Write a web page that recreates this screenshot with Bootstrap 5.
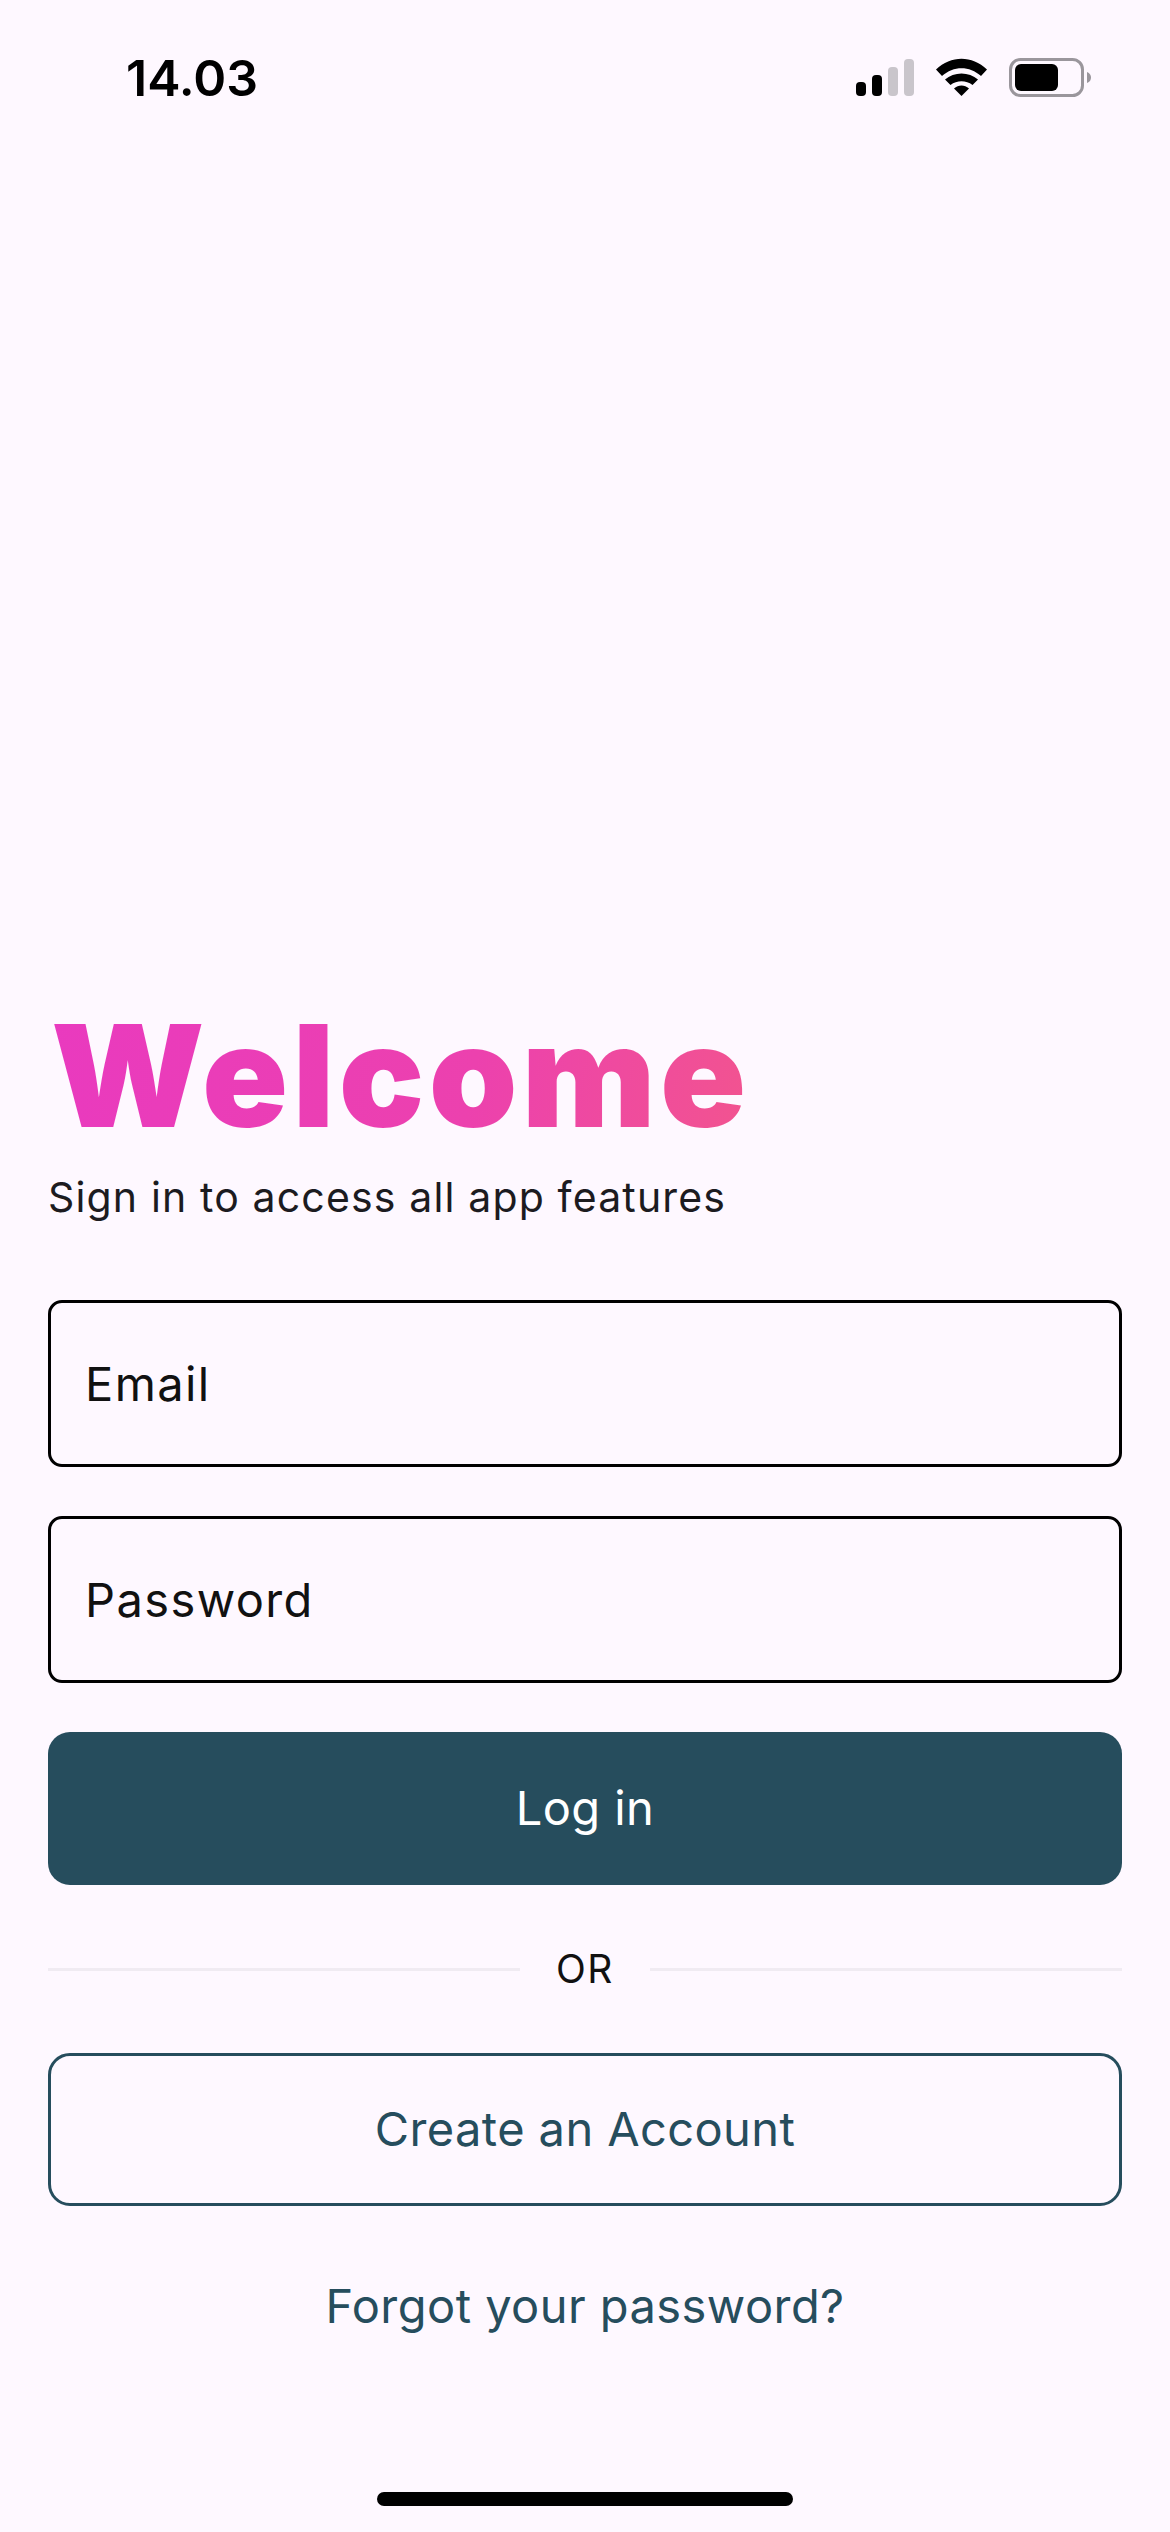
<!DOCTYPE html>
<html lang="en">
<head>
    <meta charset="UTF-8">
    <meta name="viewport" content="width=device-width, initial-scale=1.0">
    <title>Welcome</title>
    <link href="https://cdn.jsdelivr.net/npm/bootstrap@5.3.0/dist/css/bootstrap.min.css" rel="stylesheet">
    <style>
        html, body {
            height: 2532px;
            overflow: hidden;
        }
        body {
            background: #fef8ff;
            font-family: Inter, "Liberation Sans", sans-serif;
            color: #111;
        }
        .screen {
            height: 2532px;
        }
        .status-bar {
            height: 156px;
            padding: 0 79px 0 126px;
        }
        .status-time {
            font-size: 50px;
            font-weight: 600;
            color: #000;
        }
        .login-area {
            padding: 0 48px;
            margin-bottom: 154px;
        }
        .welcome-title {
            font-size: 142px;
            line-height: 168px;
            font-weight: 900;
            letter-spacing: 4.3px;
            margin: 0 0 13px 3px;
            background: linear-gradient(100deg, #e93abf 0%, #ec41ae 60%, #f2548f 100%);
            -webkit-background-clip: text;
            background-clip: text;
            color: transparent;
            width: fit-content;
        }
        .welcome-sub {
            font-size: 41px;
            line-height: 50px;
            letter-spacing: 1.15px;
            color: #1c1b1f;
            margin: 0 0 78px;
        }
        .field-input.form-control {
            height: 167px;
            background: transparent;
            border: 3px solid #000;
            border-radius: 14px;
            padding: 0 34px;
            font-size: 47px;
            letter-spacing: 1.4px;
            color: #000;
            box-shadow: none;
        }
        .field-input.form-control::placeholder {
            color: #111;
            opacity: 1;
        }
        .field-gap {
            margin: 49px 0;
        }
        .btn-main, .btn-line {
            height: 153px;
            border-radius: 22px;
            font-size: 47px;
            letter-spacing: 0.4px;
            display: flex;
            align-items: center;
            justify-content: center;
        }
        .btn-main.btn, .btn-main.btn:hover {
            background: #264d5d;
            border: 0;
            color: #fff;
        }
        .btn-line.btn, .btn-line.btn:hover {
            background: transparent;
            border: 3px solid #264d5d;
            color: #264d5d;
        }
        .or-row {
            height: 168px;
            font-size: 39px;
            letter-spacing: 1.5px;
            gap: 36px;
        }
        .or-line {
            height: 3px;
            background: #f0ebf2;
        }
        .forgot-link {
            font-size: 47px;
            letter-spacing: 0.45px;
            color: #264d5d;
            text-decoration: none;
            margin-top: 68px;
            line-height: 64px;
        }
        .home-bar {
            width: 416px;
            height: 14px;
            border-radius: 7px;
            background: #000;
            margin-bottom: 26px;
        }
    </style>
</head>
<body>
    <div class="screen d-flex flex-column">
        <div class="status-bar d-flex justify-content-between align-items-center">
            <span class="status-time">14.03</span>
            <svg width="235" height="40" viewBox="856 58 235 40">
                <rect x="856" y="82" width="10" height="14" rx="4" fill="#000"/>
                <rect x="872" y="75" width="10" height="21" rx="4" fill="#000"/>
                <rect x="888" y="67" width="10" height="29" rx="4" fill="#c9c5cb"/>
                <rect x="904" y="59" width="10" height="37" rx="4" fill="#c9c5cb"/>
                <path d="M936 69.5C951 55 972 55 987 69.5L981 76C969.5 65.5 953.5 65.5 942 76Z" fill="#000"/>
                <path d="M945 79.5C954 71.5 969 71.5 978 79.5L972.5 85C966 80 957 80 950.5 85Z" fill="#000"/>
                <path d="M954 88.5C958.5 84.5 964.5 84.5 969 88.5L961.5 96Z" fill="#000"/>
                <rect x="1010.5" y="59.5" width="72" height="36" rx="10" fill="none" stroke="#9a969c" stroke-width="3"/>
                <rect x="1015" y="64" width="43" height="27" rx="6" fill="#000"/>
                <path d="M1087 72C1090 73 1091 75.5 1091 77.5C1091 79.5 1090 82 1087 83Z" fill="#9a969c"/>
            </svg>
        </div>

        <div class="flex-grow-1"></div>

        <form class="login-area d-flex flex-column">
            <h1 class="welcome-title">Welcome</h1>
            <p class="welcome-sub">Sign in to access all app features</p>
            <input type="email" class="form-control field-input" placeholder="Email">
            <input type="password" class="form-control field-input field-gap" placeholder="Password">
            <button type="button" class="btn btn-main w-100">Log in</button>
            <div class="or-row d-flex align-items-center">
                <div class="or-line flex-grow-1"></div>
                <span>OR</span>
                <div class="or-line flex-grow-1"></div>
            </div>
            <button type="button" class="btn btn-line w-100">Create an Account</button>
            <a href="#" class="forgot-link text-center">Forgot your password?</a>
        </form>

        <div class="home-bar align-self-center"></div>
    </div>
    <script src="https://cdn.jsdelivr.net/npm/bootstrap@5.3.0/dist/js/bootstrap.bundle.min.js"></script>
</body>
</html>
